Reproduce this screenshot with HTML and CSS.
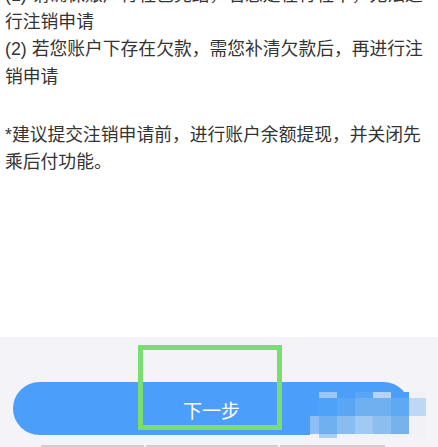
FILE: index.html
```html
<!DOCTYPE html>
<html lang="zh-CN">
<head>
<meta charset="utf-8">
<link rel="stylesheet" href="styles.css">
</head>
<body>
<div class="page">
  <section class="content">
    <div class="text">
      <p class="para">(1) 请确保账户行程已完结，若您是在行程中，无法进行注销申请<br>(2) 若您账户下存在欠款，需您补清欠款后，再进行注销申请</p>
      <p class="para note">*建议提交注销申请前，进行账户余额提现，并关闭先乘后付功能。</p>
    </div>
  </section>
  <footer class="footer">
    <button class="next">下一步</button>
    <div class="strip"><span class="seg s1"></span><span class="seg s2"></span><span class="seg s3"></span></div>
    <div class="highlight"></div>
    <div class="mosaic">
      <div class="mrow r1"><i class="c1 bl"></i><i class="c2 m1"></i><i class="c2 bl"></i><i class="c2 m2"></i><i class="c2 m3"></i><i class="c2 bl"></i><i class="c3 bg"></i></div>
      <div class="mrow r2"><i class="c1 bl"></i><i class="c2 m4"></i><i class="c2 m5"></i><i class="c2 m6"></i><i class="c2 m6"></i><i class="c2 m7"></i><i class="c3 m8"></i></div>
      <div class="mrow r3"><i class="c1 m9"></i><i class="c2 m6"></i><i class="c2 m10"></i><i class="c2 m11"></i><i class="c2 m12"></i><i class="c2 m13"></i><i class="c3 bg"></i></div>
      <div class="mrow r4"><i class="c1 bg"></i><i class="c2 m14"></i><i class="c2 bg"></i><i class="c2 bg"></i><i class="c2 bg"></i><i class="c2 bg"></i><i class="c3 bg"></i></div>
    </div>
  </footer>
</div>
</body>
</html>
```

FILE: styles.css
```css
* { box-sizing: border-box; }
html, body { margin: 0; padding: 0; background: #ffffff; }
body { width: 438px; height: 447px; overflow: hidden; }

.page {
  display: flex;
  flex-direction: column;
  height: 447px;
}

.content {
  flex: 1;
  background: #ffffff;
}

.text {
  margin-top: -18px;
  padding-left: 5px;
  width: 433px;
  font-family: "Liberation Sans", "Noto Sans CJK SC", sans-serif;
  font-size: 17.8px;
  line-height: 27.2px;
  color: #333333;
}

.para { margin: 0; }
.note { margin-top: 31px; }

.footer {
  position: relative;
  height: 110px;
  background: #f4f4f8;
  padding-top: 45px;
}

.next {
  display: block;
  margin: 0 0 0 13px;
  width: 397px;
  height: 53px;
  border: none;
  border-radius: 27px;
  background: #4b9ffa;
  color: #ffffff;
  font-family: "Noto Sans CJK SC", sans-serif;
  font-size: 19px;
  padding: 0;
  padding-top: 1px;
}

.strip {
  display: flex;
  margin-top: 10px;
  margin-left: 41px;
  height: 2px;
  gap: 2px;
}
.seg { display: block; height: 2px; background: #cfcfd3; }
.s1 { width: 103px; }
.s2 { width: 132px; }
.s3 { width: 105px; }

.highlight {
  position: absolute;
  left: 138px;
  top: 8px;
  width: 144px;
  height: 85px;
  border: 5.5px solid #79dd70;
}

.mosaic {
  position: absolute;
  left: 310px;
  top: 55px;
  width: 116px;
  display: flex;
  flex-direction: column;
}
.mrow { display: flex; }
.mrow i { display: block; height: 100%; }
.r1 { height: 6px; }
.r2 { height: 18px; }
.r3 { height: 18px; }
.r4 { height: 4px; }
.c1 { width: 9px; }
.c2 { width: 18px; }
.c3 { width: 17px; }

.bl { background: #4b9ffa; }
.bg { background: #f2f2f6; }
.m1 { background: #9cc6f5; }
.m2 { background: #58a6f8; }
.m3 { background: #b8d4f5; }
.m4 { background: #4ea2f8; }
.m5 { background: #5aa6f5; }
.m6 { background: #6eb0f0; }
.m7 { background: #5fa8f2; }
.m8 { background: #bcd8f5; }
.m9 { background: #8ebef5; }
.m10 { background: #88bdef; }
.m11 { background: #a0caf2; }
.m12 { background: #8cbef0; }
.m13 { background: #78b2ec; }
.m14 { background: #a8cdf6; }
```
